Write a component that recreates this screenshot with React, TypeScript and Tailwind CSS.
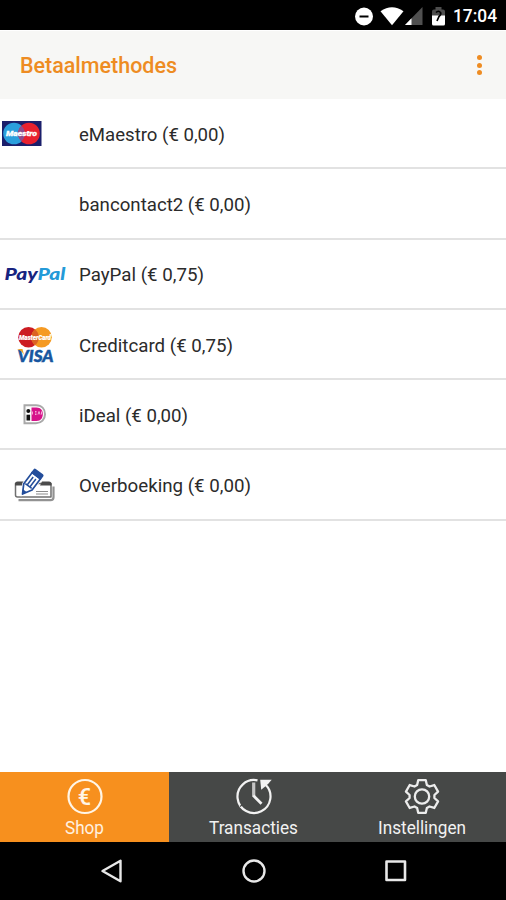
import type { ReactNode } from "react";

interface Method {
  label: string;
  width: number;
  icon: ReactNode;
}

const MaestroLogo = () => (
  <svg width="80" height="70" viewBox="0 0 80 70">
    <rect x="2" y="23" width="39.500" height="25" fill="#1b1f6b" />
    <circle cx="14" cy="35.500" r="10.800" fill="#2b9fdc" />
    <circle cx="29" cy="35.500" r="10.800" fill="#e8212e" />
    <path d="M21.500 27.700a10.800 10.800 0 0 1 0 15.600a10.800 10.800 0 0 1 0-15.600" fill="#8d4c8e" />
    <text x="6" y="38.200" fontSize="8" fontWeight="900" fontStyle="italic" fill="#fff" stroke="#fff" strokeWidth="0.300" textLength="31" lengthAdjust="spacingAndGlyphs" fontFamily="Roboto, sans-serif">Maestro</text>
  </svg>
);

const PayPalLogo = () => (
  <svg width="80" height="70" viewBox="0 0 80 70">
    <text x="4.500" y="41" fontSize="17.500" fontWeight="900" fontStyle="italic" textLength="61" lengthAdjust="spacingAndGlyphs" fontFamily="Lato, sans-serif">
      <tspan fill="#17237f">Pay</tspan>
      <tspan fill="#249ad8">Pal</tspan>
    </text>
  </svg>
);

const CardLogo = () => (
  <svg width="80" height="70" viewBox="0 0 80 70">
    <circle cx="28.500" cy="28.300" r="10.300" fill="#cc1c22" />
    <circle cx="41.500" cy="28.300" r="10.300" fill="#f59a23" />
    <path d="M35 20.300a10.300 10.300 0 0 1 0 16a10.300 10.300 0 0 1 0-16" fill="#dc6325" />
    <text x="19" y="30.600" fontSize="7" fontWeight="900" fontStyle="italic" fill="#fff" stroke="#fff" strokeWidth="0.200" textLength="32" lengthAdjust="spacingAndGlyphs" fontFamily="Roboto, sans-serif">MasterCard</text>
    <text x="17.500" y="52.500" fontSize="17" fontWeight="900" fontStyle="italic" fill="#17569f" stroke="#17569f" strokeWidth="0.500" textLength="36" lengthAdjust="spacingAndGlyphs" fontFamily="Lato, sans-serif">VISA</text>
    <path d="M17 40h5.500l1.500 6c-1.500-3-3.500-5-7-6" fill="#eda329" />
  </svg>
);

const IdealLogo = () => (
  <svg width="80" height="70" viewBox="0 0 80 70">
    <path d="M24.500 26.200h11.500c6 0 9 4 9 9s-3.500 9-9 9H24.500z" fill="#fff" stroke="#a9a9a9" strokeWidth="2" />
    <path d="M31.500 28.500h5c4.500 0 6.300 3 6.300 6.700s-2 6.700-6.300 6.700h-5z" fill="#d6128a" />
    <path d="M32.500 32.500v3M35 32.500h1.500M35 34h1.500M35 35.500h1.500M38 35.500l1-3l1 3M41.500 32.500v3" stroke="#f5bddd" strokeWidth="0.900" fill="none" />
    <circle cx="28.300" cy="32" r="2" fill="#111" />
    <rect x="26.500" y="35.700" width="3.600" height="5.800" fill="#111" />
  </svg>
);

const TransferLogo = () => (
  <svg width="80" height="70" viewBox="0 0 80 70">
    <path d="M18.500 50.200h32a3 3 0 0 0 3-3V36.500" fill="none" stroke="#929292" strokeWidth="2.200" />
    <path d="M15.500 33.500h35.500v13.500H17.500a2 2 0 0 1-2-2z" fill="#fff" stroke="#707070" strokeWidth="1.500" strokeLinejoin="round" />
    <path d="M15 35.500v-1.500a2.500 2.500 0 0 1 2.500-2.500h6.500l-2 4zM42 31.500h7a2.500 2.500 0 0 1 2.500 2.500v1.500H40z" fill="#4b4b4b" />
    <path d="M36 41.500h12M36 44h12" stroke="#8c8c8c" strokeWidth="1.100" />
    <g transform="translate(22.500 44) rotate(37)">
      <path d="M0 0l-5.200-9v-18.500h10.400V-9z" fill="#fff" stroke="#fff" strokeWidth="3" />
      <path d="M0 0l-5.200-9v-14h10.400v14z" fill="#fff" stroke="#244e9b" strokeWidth="1.700" strokeLinejoin="round" />
      <path d="M-6-22v-4.500q0-1.500 1.500-1.500h9q1.500 0 1.500 1.500v4.500z" fill="#244e9b" />
      <path d="M-1.700-20v10M1.700-20v10M-4-10h8" stroke="#244e9b" strokeWidth="1.500" />
      <path d="M0 1l-2.600-5h5.200z" fill="#244e9b" />
    </g>
  </svg>
);

const methods: Method[] = [
  { label: "eMaestro (€ 0,00)", width: 146, icon: <MaestroLogo /> },
  { label: "bancontact2 (€ 0,00)", width: 172, icon: null },
  { label: "PayPal (€ 0,75)", width: 125, icon: <PayPalLogo /> },
  { label: "Creditcard (€ 0,75)", width: 154, icon: <CardLogo /> },
  { label: "iDeal (€ 0,00)", width: 109, icon: <IdealLogo /> },
  { label: "Overboeking (€ 0,00)", width: 172, icon: <TransferLogo /> },
];

const StatusIcons = () => (
  <svg width="92" height="30" viewBox="354 0 92 30">
    <circle cx="364" cy="15.500" r="9" fill="#fff" />
    <path d="M359.500 15.500h9" stroke="#000" strokeWidth="2" />
    <path d="M380.500 10.200q11.500-8 23 0L392 24.300z" fill="#fff" />
    <path d="M405 24L422.500 6v18z" fill="#505050" />
    <path d="M405 24l6.500-6.700V24z" fill="#fff" />
    <path d="M432 10.500q0-2 2-2h1.500V6h6v2.500h1.500q2 0 2 2V15h-13z" fill="#4d4d4d" />
    <path d="M432 14.500h13v8.500q0 1.500-1.500 1.500h-10q-1.500 0-1.500-1.500z" fill="#fff" />
    <path d="M436 11.500q2.500-2.500 4.500 0q1 2-1.500 4l-2 4.500" stroke="#000" strokeWidth="1.700" fill="none" />
  </svg>
);

const EuroIcon = () => (
  <svg width="40" height="40" viewBox="0 0 40 40">
    <circle cx="20" cy="20.500" r="16.500" fill="none" stroke="#fff5e6" strokeWidth="2.200" />
    <text x="19.500" y="28.700" fontSize="23.500" fontWeight="500" fill="#fff5e6" textAnchor="middle" fontFamily="Roboto, sans-serif">€</text>
  </svg>
);

const HistoryIcon = () => (
  <svg width="40" height="40" viewBox="0 0 40 40" fill="none" stroke="#f2f2f2">
    <path d="M23.500 4.400A16.500 16.500 0 1 0 31.600 8.800" strokeWidth="2.200" />
    <path d="M19.700 6.500v14" strokeWidth="3.200" stroke="#c4c4c4" />
    <path d="M19.300 19.500l8.200 8.200" strokeWidth="2.800" />
    <path d="M26.200 3.700h11.500l-3 3.500l-2.300 2.200l-5.200 4.300z" fill="#f2f2f2" stroke="none" />
    <path d="M6 30.500l2.700-2" strokeWidth="1.200" stroke="#464847" />
  </svg>
);

// six teeth, each one four points around the hub
const gearPoints = Array.from({ length: 6 }, (_, i) =>
  [[-23, 12.5], [-13, 16.800], [13, 16.800], [23, 12.5]].map(([deg, r]) => {
    const a = ((i * 60 + deg - 90) * Math.PI) / 180;
    return `${(20 + r * Math.cos(a)).toFixed(2)},${(20.5 + r * Math.sin(a)).toFixed(2)}`;
  }).join(" ")
).join(" ");

const GearIcon = () => (
  <svg width="40" height="40" viewBox="0 0 40 40" fill="none" stroke="#ececec" strokeWidth="2.300" strokeLinejoin="round">
    <polygon points={gearPoints} />
    <circle cx="20" cy="20.500" r="7.200" />
  </svg>
);

const tabs = [
  { label: "Shop", width: 39, icon: <EuroIcon />, style: "w-[169px] bg-[#f7901e] text-[#fff0e0]" },
  { label: "Transacties", width: 89, icon: <HistoryIcon />, style: "w-[169px] bg-[#464847] text-[#f2f2f2]" },
  { label: "Instellingen", width: 88, icon: <GearIcon />, style: "w-[168px] bg-[#464847] text-[#f2f2f2]" },
];

// one line of text set to a fixed width
function Label({ text, width, size, weight = 400 }: { text: string; width: number; size: number; weight?: number }) {
  return (
    <svg width={width} height="26" className="block shrink-0 overflow-visible">
      <text x="0" y="19" fill="currentColor" fontSize={size} fontWeight={weight} textLength={width} lengthAdjust="spacingAndGlyphs" fontFamily="Roboto, sans-serif">{text}</text>
    </svg>
  );
}

export default function App() {
  return (
    <div className="w-[506px] h-[900px] flex flex-col bg-white overflow-hidden font-['Roboto',sans-serif]">
      <div className="h-[30px] shrink-0 bg-black flex justify-end items-center pt-[1px] pr-[9px] text-white">
        <StatusIcons />
        <div className="w-[7px]"></div>
        <Label text="17:04" width={44} size={18.5} weight={500} />
      </div>

      <header className="h-[69px] shrink-0 bg-[#f7f7f5] border-t border-white flex items-center justify-between pl-[20px] pr-[24px] text-[#ee8c22]">
        <div className="pt-[4px]">
          <Label text="Betaalmethodes" width={157} size={21.3} weight={500} />
        </div>
        <div className="flex flex-col gap-[2.500px]">
          <div className="w-[5px] h-[5px] rounded-full bg-[#ee8c22]"></div>
          <div className="w-[5px] h-[5px] rounded-full bg-[#ee8c22]"></div>
          <div className="w-[5px] h-[5px] rounded-full bg-[#ee8c22]"></div>
        </div>
      </header>

      <main className="flex-1">
        {methods.map((m) => (
          <div key={m.label} className="h-[70.3px] flex items-center border-b-2 border-[#e2e2e2] text-[#2b2b2b]">
            <div className="w-[79px] h-[70px] shrink-0">{m.icon}</div>
            <div className="pt-[3px]">
              <Label text={m.label} width={m.width} size={19.2} />
            </div>
          </div>
        ))}
      </main>

      <nav className="h-[70px] shrink-0 flex bg-[#464847]">
        {tabs.map((t) => (
          <div key={t.label} className={`${t.style} flex flex-col items-center pt-[4px]`}>
            {t.icon}
            <div className="-mt-[1px]">
              <Label text={t.label} width={t.width} size={18} />
            </div>
          </div>
        ))}
      </nav>

      <div className="h-[58px] shrink-0 bg-black flex items-center justify-between pl-[97px] pr-[96px]">
        <svg width="28" height="28" viewBox="0 0 28 28" fill="none" stroke="#e8e8e8" strokeWidth="2.400" strokeLinejoin="round">
          <path d="M23.500 3.700v20.600L5.500 14z" />
        </svg>
        <svg width="28" height="28" viewBox="0 0 28 28" fill="none" stroke="#e8e8e8" strokeWidth="2.400">
          <circle cx="14" cy="14" r="10.500" />
        </svg>
        <svg width="28" height="28" viewBox="0 0 28 28" fill="none" stroke="#e8e8e8" strokeWidth="2.600" strokeLinejoin="round">
          <rect x="4.500" y="4.500" width="18.500" height="18.500" />
        </svg>
      </div>
    </div>
  );
}
